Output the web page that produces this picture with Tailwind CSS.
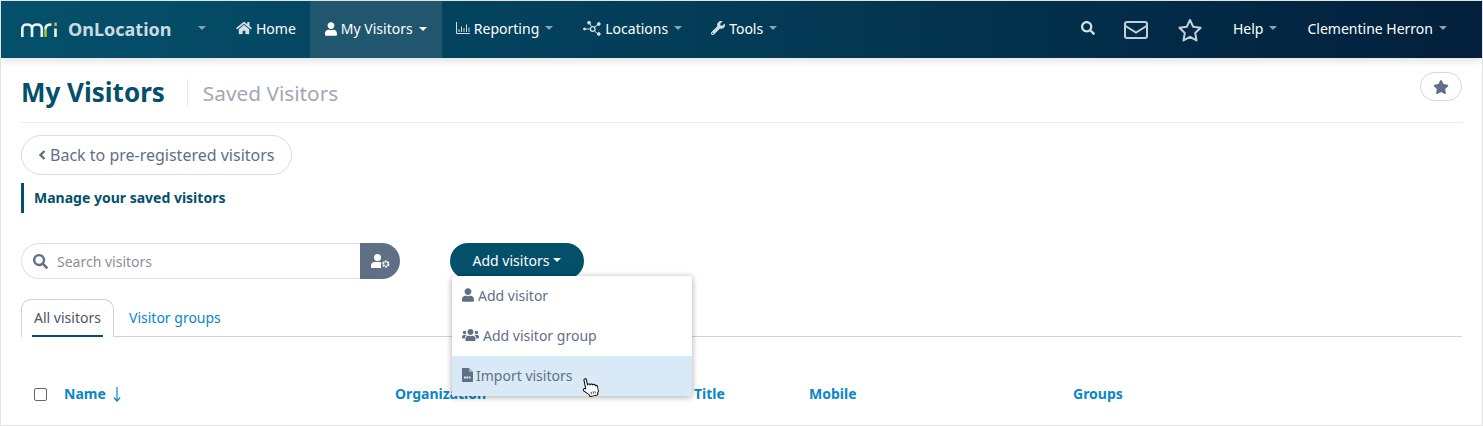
<!DOCTYPE html>
<html lang="en">
<head>
    <meta charset="UTF-8">
    <title>My Visitors - OnLocation</title>
    <meta name="viewport" content="width=device-width, initial-scale=1.0">
    <script src="https://cdn.jsdelivr.net/npm/@tailwindcss/browser@4"></script>
</head>
<body class="bg-white overflow-hidden font-['Noto_Sans',sans-serif]">
<div class="relative w-[1483px] h-[426px] border border-[#e3e3e3] overflow-hidden">

    <!-- top nav -->
    <nav class="relative z-10 flex items-center h-[57px] pb-[3px] text-[14px] text-white bg-gradient-to-r from-[#04506b] via-[#033b56] to-[#021f3b] shadow-[0_3px_8px_rgba(0,0,0,0.12)]">
        <div class="flex items-center w-[221px] pl-[20px]">
            <svg class="w-[38px] h-[16px] mt-[3px] shrink-0" viewBox="0 0 38 16" fill="none" stroke-width="2.600">
                <path d="M1.300 15V7C1.300 4 3 2.500 6 2.500C9 2.500 11 4 11 7V15M11 7C11 4 13 2.500 16 2.500C19 2.500 20.800 4 20.800 7V15" stroke="#eef3f5"/>
                <path d="M24.500 7C24.500 4 26.500 2.500 30 2.500H30.500" stroke="#eef3f5"/>
                <path d="M24.500 15V7" stroke="#a4c639"/>
                <path d="M34.500 6.500V15" stroke="#eef3f5"/>
                <path d="M34.500 0.500V4" stroke="#a4c639"/>
            </svg>
            <span class="ml-[9px] mt-[2px] text-[18px] font-bold text-[#c9dbe1]">OnLocation</span>
            <span class="ml-[27px] w-0 h-0 border-x-[4px] border-x-transparent border-t-[4px] border-t-[#8aa3b0]"></span>
        </div>

        <a class="flex items-center gap-[4px] ml-[14px]">
            <svg class="w-[16px] h-[14px] fill-[#d3dfe4]" viewBox="0 0 576 512"><path d="M280.370 148.260L96 300.110V464a16 16 0 0 0 16 16l112.060-.29a16 16 0 0 0 15.920-16V368a16 16 0 0 1 16-16h64a16 16 0 0 1 16 16v95.640a16 16 0 0 0 16 16.050L464 480a16 16 0 0 0 16-16V300L295.670 148.260a12.190 12.190 0 0 0-15.300 0zM571.600 251.470L488 182.560V44.050a12 12 0 0 0-12-12h-56a12 12 0 0 0-12 12v72.610L318.470 43a48 48 0 0 0-61 0L4.340 251.470a12 12 0 0 0-1.600 16.900l25.500 31A12 12 0 0 0 45.150 301l235.220-193.740a12.190 12.190 0 0 1 15.300 0L530.900 301a12 12 0 0 0 16.900-1.600l25.500-31a12 12 0 0 0-1.700-16.930z"/></svg>
            Home
        </a>

        <a class="flex items-center gap-[4px] self-start h-[57px] pb-[2px] ml-[14px] pl-[15px] w-[132px] bg-[#20566e]">
            <svg class="w-[12px] h-[14px] fill-white" viewBox="0 0 448 512"><path d="M224 256c70.700 0 128-57.300 128-128S294.700 0 224 0 96 57.300 96 128s57.300 128 128 128zm89.600 32h-16.700c-22.200 10.200-46.900 16-72.900 16s-50.600-5.800-72.900-16h-16.700C60.200 288 0 348.200 0 422.400V464c0 26.500 21.500 48 48 48h352c26.500 0 48-21.500 48-48v-41.600c0-74.200-60.200-134.400-134.400-134.400z"/></svg>
            My Visitors
            <span class="ml-[2px] w-0 h-0 border-x-[4px] border-x-transparent border-t-[4px] border-t-white"></span>
        </a>

        <a class="flex items-center gap-[4px] ml-[14px]">
            <svg class="w-[14px] h-[12px]" viewBox="0 0 14 12" fill="none" stroke="#d3dfe4"><path d="M0.500 0V11.500H14M3 10V7M5.500 10V4.500M8 10V6M10.500 10V2.500M13 10V5.500"/></svg>
            Reporting
            <span class="ml-[2px] w-0 h-0 border-x-[4px] border-x-transparent border-t-[4px] border-t-[#8aa3b0]"></span>
        </a>

        <a class="flex items-center gap-[4px] ml-[30px]">
            <svg class="w-[18px] h-[15px]" viewBox="0 0 18 15" fill="#d3dfe4" stroke="#d3dfe4" stroke-width="1"><path d="M2 8H7M6.500 2L8.500 5.500M11.500 10L15 13M11.500 6L15.500 3.500" fill="none"/><circle cx="1.500" cy="8" r="1"/><circle cx="6" cy="1.700" r="1.400"/><circle cx="15.800" cy="3" r="1.400"/><circle cx="15.800" cy="13" r="1.400"/><circle cx="9.700" cy="8" r="2.300" fill="none" stroke-width="1.300"/></svg>
            Locations
            <span class="ml-[2px] w-0 h-0 border-x-[4px] border-x-transparent border-t-[4px] border-t-[#8aa3b0]"></span>
        </a>

        <a class="flex items-center gap-[4px] ml-[29px]">
            <svg class="w-[14px] h-[14px] fill-[#d3dfe4]" viewBox="0 0 512 512"><path d="M507.730 109.100c-2.240-9.030-13.540-12.090-20.120-5.510l-74.360 74.360-67.880-11.310-11.310-67.880 74.360-74.360c6.620-6.620 3.430-17.900-5.660-20.160-47.380-11.740-99.550.91-136.580 37.930-39.640 39.640-50.550 97.100-34.050 147.200L18.740 402.760c-24.990 24.990-24.990 65.510 0 90.500 24.990 24.990 65.510 24.990 90.500 0l213.210-213.210c50.120 16.710 107.470 5.680 147.370-34.220 37.070-37.070 49.700-89.320 37.910-136.730zM64 472c-13.250 0-24-10.750-24-24 0-13.260 10.750-24 24-24s24 10.740 24 24c0 13.250-10.750 24-24 24z"/></svg>
            Tools
            <span class="ml-[2px] w-0 h-0 border-x-[4px] border-x-transparent border-t-[4px] border-t-[#8aa3b0]"></span>
        </a>

        <div class="ml-auto flex items-center">
            <svg class="w-[14px] h-[14px] fill-[#d3dfe4]" viewBox="0 0 512 512"><path d="M505 442.700L405.300 343c-4.500-4.500-10.600-7-17-7H372c27.600-35.300 44-79.700 44-128C416 93.100 322.900 0 208 0S0 93.100 0 208s93.100 208 208 208c48.300 0 92.700-16.400 128-44v16.300c0 6.400 2.500 12.500 7 17l99.700 99.700c9.400 9.400 24.600 9.400 33.900 0l28.300-28.300c9.400-9.400 9.400-24.600.1-34zM208 336c-70.700 0-128-57.200-128-128 0-70.700 57.200-128 128-128 70.700 0 128 57.200 128 128 0 70.700-57.200 128-128 128z"/></svg>
            <svg class="ml-[29px] mt-[4px] w-[24px] h-[18px]" viewBox="0 0 24 18" fill="none" stroke="#c3d0d8" stroke-width="2"><rect x="1" y="1" width="22" height="16" rx="2"/><path d="M1.500 5L12 11.500L22.500 5"/></svg>
            <svg class="ml-[29px] mt-[4px] w-[26px] h-[24px]" viewBox="0 0 26 24" fill="none" stroke="#c3d0d8" stroke-width="2" stroke-linejoin="round"><path d="M13 2L16.200 8.800L23.600 9.800L18.200 15L19.500 22.400L13 18.800L6.500 22.400L7.800 15L2.400 9.800L9.800 8.800Z"/></svg>
            <span class="ml-[30px] flex items-center gap-[6px]">Help <span class="w-0 h-0 border-x-[4px] border-x-transparent border-t-[4px] border-t-[#8aa3b0]"></span></span>
            <span class="ml-[30px] mr-[35px] flex items-center gap-[6px]">Clementine Herron <span class="w-0 h-0 border-x-[4px] border-x-transparent border-t-[4px] border-t-[#8aa3b0]"></span></span>
        </div>
    </nav>

    <main class="px-[20px]">
        <!-- page title -->
        <div class="relative flex items-center h-[65px] pt-[3px] border-b border-[#ebebeb]">
            <h1 class="text-[26px] leading-[36px] font-bold text-[#04506b]">My Visitors</h1>
            <span class="ml-[22px] mt-[2px] pl-[15px] border-l border-[#e8e8e8] text-[20.8px] leading-[28px] text-[#a1a7b6]">Saved Visitors</span>
            <button class="absolute right-0 top-[14px] flex items-center justify-center w-[42px] h-[29px] rounded-full border border-[#cfd8df]">
                <svg class="w-[16px] h-[14px] fill-[#5f7086]" viewBox="0 0 576 512"><path d="M259.300 17.800L194 150.200 47.900 171.500c-26.200 3.800-36.700 36.100-17.700 54.600l105.700 103-25 145.500c-4.500 26.300 23.200 46 46.400 33.700L288 439.600l130.700 68.700c23.200 12.200 50.900-7.400 46.400-33.700l-25-145.500 105.700-103c19-18.500 8.500-50.800-17.700-54.600L382 150.200 316.700 17.800c-11.700-23.600-45.600-23.900-57.400 0z"/></svg>
            </button>
        </div>

        <button class="flex items-center gap-[4px] mt-[12px] h-[40px] w-[271px] pl-[17px] rounded-full border border-[#d5dde6] text-[16px] text-[#5f7086]">
            <svg class="w-[7px] h-[10px]" viewBox="0 0 7 10" fill="none" stroke="#5f7086" stroke-width="2.400"><path d="M5.500 1L1.500 5L5.500 9"/></svg>
            Back to pre-registered visitors
        </button>

        <div class="flex items-center mt-[8px] h-[30px] pb-[2px] pl-[10px] border-l-[3px] border-[#04506b] text-[14px] font-bold text-[#04506b]">Manage your saved visitors</div>

        <!-- search and add -->
        <div class="flex items-start mt-[30px]">
            <div class="flex items-center w-[339px] h-[36px] pl-[11px] rounded-l-full border border-r-0 border-[#dde3e8]">
                <svg class="w-[15px] h-[15px] fill-[#5f7086]" viewBox="0 0 512 512"><path d="M505 442.700L405.300 343c-4.500-4.500-10.600-7-17-7H372c27.600-35.300 44-79.700 44-128C416 93.100 322.900 0 208 0S0 93.100 0 208s93.100 208 208 208c48.300 0 92.700-16.400 128-44v16.300c0 6.400 2.500 12.500 7 17l99.700 99.700c9.400 9.400 24.600 9.400 33.900 0l28.300-28.300c9.400-9.400 9.400-24.600.1-34zM208 336c-70.700 0-128-57.200-128-128 0-70.700 57.200-128 128-128 70.700 0 128 57.200 128 128 0 70.700-57.200 128-128 128z"/></svg>
                <span class="ml-[9px] text-[14px] text-[#8a8f98]">Search visitors</span>
            </div>
            <button class="flex items-center justify-center w-[40px] h-[36px] rounded-r-full bg-[#5f7086]">
                <svg class="w-[19px] h-[14px] fill-white" viewBox="0 0 19 14"><circle cx="6.500" cy="3.500" r="3.500"/><path d="M0 14V11.500C0 9.500 1.500 8 3.500 8H9.500C10.500 8 10.500 9 10 10.500C9.800 12 10 13 10.500 14Z"/><circle cx="14.800" cy="10" r="2.600" fill="none" stroke="white" stroke-width="2" stroke-dasharray="2 0.700"/></svg>
            </button>
            <button class="flex items-center justify-center gap-[4px] ml-[50px] w-[134px] h-[36px] pb-[2px] rounded-full bg-[#04506b] text-[14px] text-white">
                Add visitors
                <span class="w-0 h-0 border-x-[4px] border-x-transparent border-t-[4px] border-t-white"></span>
            </button>
        </div>

        <!-- tabs -->
        <div class="flex items-end mt-[20px] h-[38px] border-b border-[#c9d5da] text-[14px]">
            <div class="relative flex justify-center w-[93px] h-[38px] pt-[7px] -mb-px rounded-t-[10px] border border-b-0 border-[#c9d5da] bg-white text-[#4b5563]">
                All visitors
                <span class="absolute left-[10px] right-[10px] bottom-0 h-[2px] bg-[#04506b]"></span>
            </div>
            <div class="h-[38px] pt-[9px] ml-[15px] text-[#0a86c8]">Visitor groups</div>
        </div>

        <!-- table header -->
        <div class="flex items-center mt-[46px] h-[22px] pb-[2px] text-[14px] font-bold text-[#0a86c8]">
            <span class="w-[13px] h-[13px] ml-[13px] mt-[2px] rounded-[2px] border border-[#66666f]"></span>
            <span class="flex items-center gap-[7px] w-[331px] ml-[17px]">Name
                <svg class="w-[8px] h-[15px] mt-[2px]" viewBox="0 0 8 15" fill="none" stroke="#0a86c8" stroke-width="1.200"><path d="M4 0V14M0.800 10.500L4 14L7.200 10.500"/></svg>
            </span>
            <span class="w-[299px]">Organization</span>
            <span class="w-[115px]">Title</span>
            <span class="w-[264px]">Mobile</span>
            <span>Groups</span>
        </div>
    </main>

    <!-- dropdown -->
    <div class="absolute z-20 left-[451px] top-[275px] w-[240px] h-[120px] rounded-[3px] bg-white text-[14px] text-[#5f7086] shadow-[0_1px_6px_rgba(0,0,0,0.35)]">
        <div class="flex items-center gap-[4px] h-[40px] pb-[2px] pl-[10px]">
            <svg class="w-[12px] h-[14px] fill-[#5f7086]" viewBox="0 0 448 512"><path d="M224 256c70.700 0 128-57.300 128-128S294.700 0 224 0 96 57.300 96 128s57.300 128 128 128zm89.600 32h-16.700c-22.200 10.200-46.900 16-72.900 16s-50.600-5.800-72.900-16h-16.700C60.200 288 0 348.200 0 422.400V464c0 26.500 21.500 48 48 48h352c26.500 0 48-21.500 48-48v-41.600c0-74.200-60.200-134.400-134.400-134.400z"/></svg>
            Add visitor
        </div>
        <div class="flex items-center gap-[4px] h-[40px] pb-[2px] pl-[10px]">
            <svg class="w-[17px] h-[14px] fill-[#5f7086]" viewBox="0 0 640 512"><path d="M96 224c35.300 0 64-28.700 64-64s-28.700-64-64-64-64 28.700-64 64 28.700 64 64 64zm448 0c35.300 0 64-28.700 64-64s-28.700-64-64-64-64 28.700-64 64 28.700 64 64 64zm32 32h-64c-17.600 0-33.500 7.100-45.100 18.600 40.300 22.100 68.900 62 75.100 109.400h66c17.700 0 32-14.300 32-32v-32c0-35.300-28.700-64-64-64zm-256 0c61.900 0 112-50.100 112-112S381.900 32 320 32 208 82.100 208 144s50.100 112 112 112zm76.800 32h-8.300c-20.800 10-43.900 16-68.500 16s-47.600-6-68.500-16h-8.300C179.600 288 128 339.600 128 403.200V432c0 26.500 21.500 48 48 48h288c26.500 0 48-21.500 48-48v-28.800c0-63.600-51.600-115.200-115.200-115.200zm-223.700-13.400C161.500 263.100 145.600 256 128 256H64c-35.300 0-64 28.700-64 64v32c0 17.700 14.300 32 32 32h65.900c6.300-47.400 34.900-87.300 75.200-109.400z"/></svg>
            Add visitor group
        </div>
        <div class="flex items-center gap-[3px] h-[40px] pb-[2px] pl-[10px] bg-[#d9e9f5]">
            <svg class="w-[11px] h-[14px]" viewBox="0 0 11 14"><path d="M0 1C0 .4.400 0 1 0H7L11 4V13C11 13.600 10.600 14 10 14H1C.4 14 0 13.600 0 13Z" fill="#5f7086"/><path d="M7 0V4H11" fill="#d9e9f5" fill-opacity=".5"/><path d="M2 9.500H9" stroke="#d9e9f5" stroke-width="2" stroke-dasharray="1.800 .6"/></svg>
            Import visitors
        </div>
    </div>

    <!-- mouse cursor -->
    <svg class="absolute z-30 left-[581px] top-[376px] w-[16px] h-[20px] -rotate-[12deg]" viewBox="0 0 16 20" stroke="#000" stroke-width="1" stroke-linejoin="round">
        <path d="M3.500 11V2C3.500 0.500 6 0.500 6 2V7.500C6 6.500 8.500 6.500 8.500 7.500V8C8.500 7 11 7 11 8.500C11 7.500 13.500 8 13.500 9.500V10C13.500 9 15.500 9.500 15.500 11V15C15.500 16 14.500 17 14 18V19.500H6V18C5 16.500 3 14.500 1 12.500C0 11 2 9.500 3.500 11Z" fill="#fff"/>
        <path d="M8 15V17.500M10 15V17.500M12 15V17.500" fill="none" stroke="#555"/>
    </svg>
</div>
</body>
</html>
